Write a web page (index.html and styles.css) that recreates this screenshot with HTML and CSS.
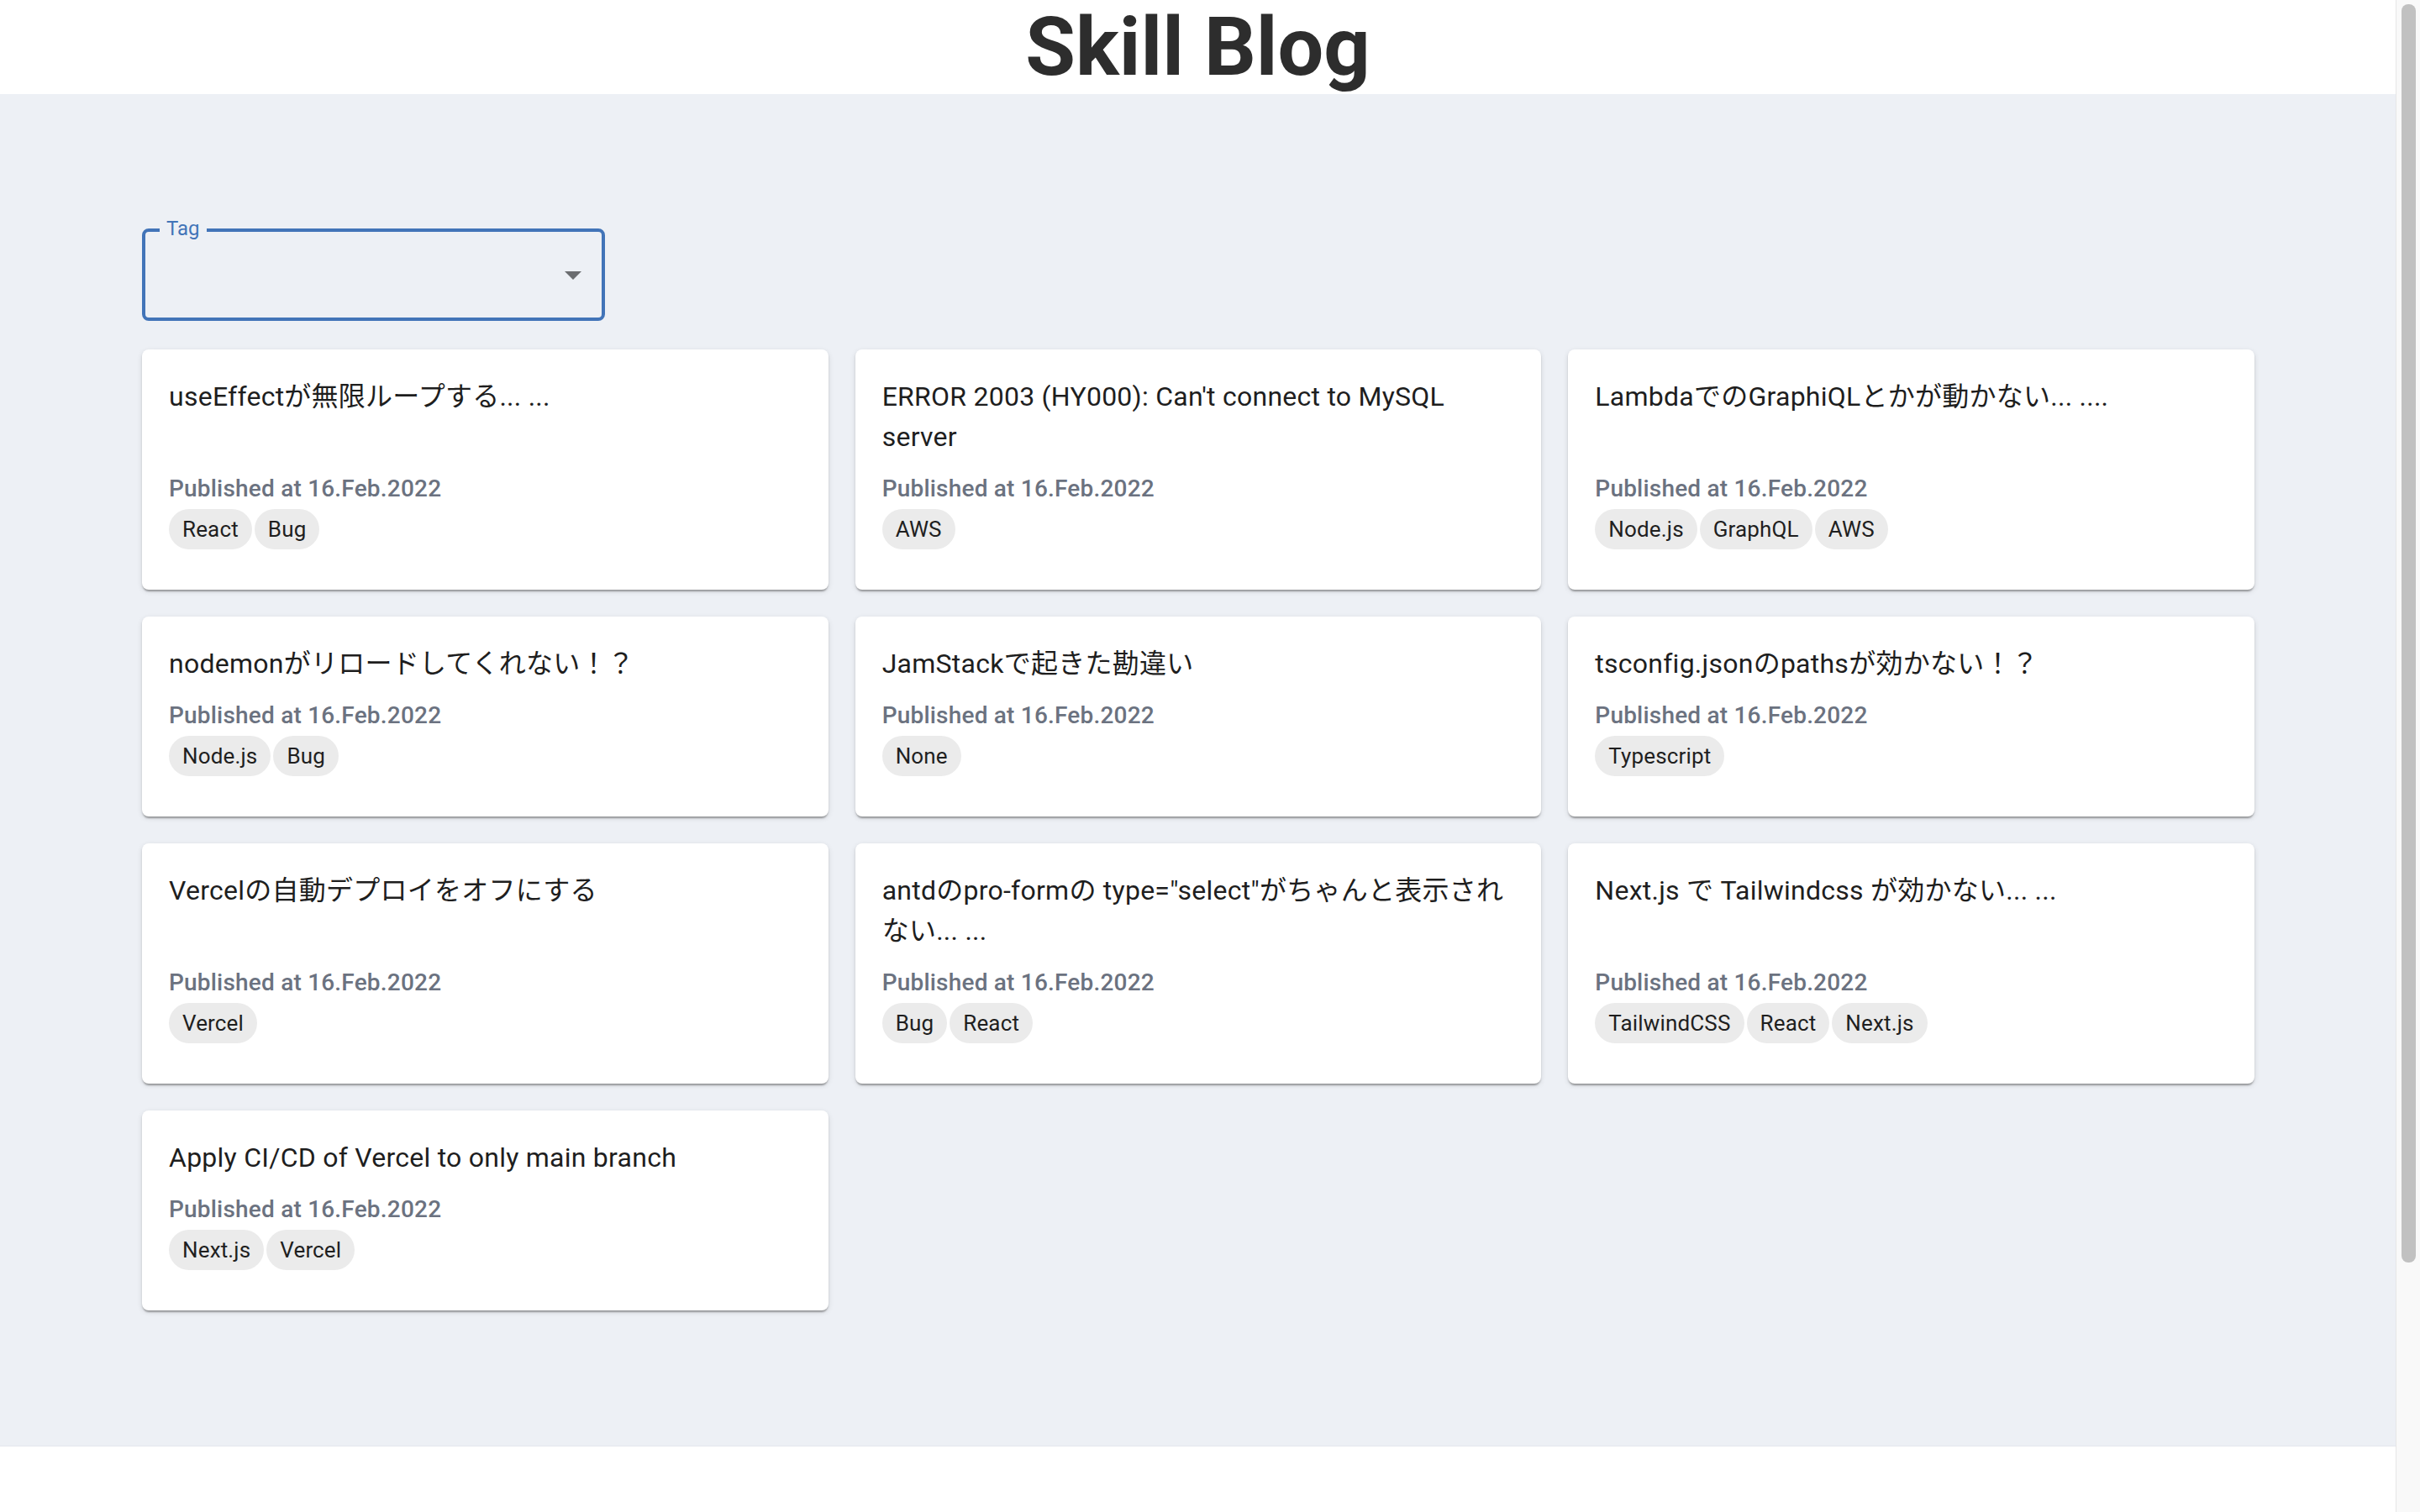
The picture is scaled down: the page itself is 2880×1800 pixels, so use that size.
FILE: index.html
```html
<!DOCTYPE html>
<html lang="ja">
<head>
<meta charset="utf-8">
<title>Skill Blog</title>
<link rel="stylesheet" href="styles.css">
</head>
<body>
<div class="window">
  <div class="page">
    <header class="site-header">
      <h1 class="site-title">Skill Blog</h1>
    </header>
    <main class="main">
      <div class="tag-field">
        <span class="tag-label">Tag</span>
        <svg class="tag-arrow" viewBox="0 0 24 24" width="48" height="48"><path d="M7 10l5 5 5-5z"/></svg>
      </div>
      <div class="grid">
        <article class="card">
          <h2 class="card-title">useEffectが無限ループする... ...</h2>
          <div class="card-meta">
            <p class="published">Published at 16.Feb.2022</p>
            <div class="chips"><span class="chip">React</span><span class="chip">Bug</span></div>
          </div>
        </article>
        <article class="card">
          <h2 class="card-title">ERROR 2003 (HY000): Can't connect to MySQL server</h2>
          <div class="card-meta">
            <p class="published">Published at 16.Feb.2022</p>
            <div class="chips"><span class="chip">AWS</span></div>
          </div>
        </article>
        <article class="card">
          <h2 class="card-title">LambdaでのGraphiQLとかが動かない... ....</h2>
          <div class="card-meta">
            <p class="published">Published at 16.Feb.2022</p>
            <div class="chips"><span class="chip">Node.js</span><span class="chip">GraphQL</span><span class="chip">AWS</span></div>
          </div>
        </article>
        <article class="card">
          <h2 class="card-title">nodemonがリロードしてくれない！？</h2>
          <div class="card-meta">
            <p class="published">Published at 16.Feb.2022</p>
            <div class="chips"><span class="chip">Node.js</span><span class="chip">Bug</span></div>
          </div>
        </article>
        <article class="card">
          <h2 class="card-title">JamStackで起きた勘違い</h2>
          <div class="card-meta">
            <p class="published">Published at 16.Feb.2022</p>
            <div class="chips"><span class="chip">None</span></div>
          </div>
        </article>
        <article class="card">
          <h2 class="card-title">tsconfig.jsonのpathsが効かない！？</h2>
          <div class="card-meta">
            <p class="published">Published at 16.Feb.2022</p>
            <div class="chips"><span class="chip">Typescript</span></div>
          </div>
        </article>
        <article class="card">
          <h2 class="card-title">Vercelの自動デプロイをオフにする</h2>
          <div class="card-meta">
            <p class="published">Published at 16.Feb.2022</p>
            <div class="chips"><span class="chip">Vercel</span></div>
          </div>
        </article>
        <article class="card">
          <h2 class="card-title">antdのpro-formの type="select"がちゃんと表示されない... ...</h2>
          <div class="card-meta">
            <p class="published">Published at 16.Feb.2022</p>
            <div class="chips"><span class="chip">Bug</span><span class="chip">React</span></div>
          </div>
        </article>
        <article class="card">
          <h2 class="card-title">Next.js で Tailwindcss が効かない... ...</h2>
          <div class="card-meta">
            <p class="published">Published at 16.Feb.2022</p>
            <div class="chips"><span class="chip">TailwindCSS</span><span class="chip">React</span><span class="chip">Next.js</span></div>
          </div>
        </article>
        <article class="card">
          <h2 class="card-title">Apply CI/CD of Vercel to only main branch</h2>
          <div class="card-meta">
            <p class="published">Published at 16.Feb.2022</p>
            <div class="chips"><span class="chip">Next.js</span><span class="chip">Vercel</span></div>
          </div>
        </article>
      </div>
    </main>
    <footer class="site-footer"></footer>
  </div>
  <div class="scrollbar"><div class="scroll-thumb"></div></div>
</div>
</body>
</html>
```

FILE: styles.css
```css
html, body {
  margin: 0;
  padding: 0;
  height: 1800px;
  overflow: hidden;
  background: #ffffff;
  font-family: Roboto, "Noto Sans CJK JP", sans-serif;
}

.window {
  display: flex;
  height: 1800px;
}

.page {
  flex: 1;
  display: flex;
  flex-direction: column;
  min-width: 0;
}

.site-header {
  height: 112px;
  background: #ffffff;
  display: flex;
  justify-content: center;
}

.site-title {
  margin: 0;
  font-family: Roboto, sans-serif;
  font-weight: 700;
  font-size: 97px;
  line-height: 112px;
  color: #2d2d2d;
}

.main {
  background: #edf0f5;
  padding: 160px 168px 161px 169px;
}

.tag-field {
  position: relative;
  box-sizing: border-box;
  width: 551px;
  height: 110px;
  border: 4px solid #4274b8;
  border-radius: 8px;
  display: flex;
  justify-content: flex-end;
  align-items: center;
  padding-right: 10px;
  margin-bottom: 34px;
}

.tag-label {
  position: absolute;
  left: 17px;
  top: -16px;
  padding: 0 8px;
  background: #edf0f5;
  font-size: 24px;
  line-height: 24px;
  color: #4274b8;
}

.tag-arrow {
  fill: #6b6d70;
  display: block;
}

.grid {
  display: grid;
  grid-template-columns: repeat(3, 1fr);
  gap: 32px;
}

.card {
  background: #ffffff;
  border-radius: 8px;
  box-shadow: 0 4px 2px -2px rgba(0,0,0,0.2), 0 2px 2px 0 rgba(0,0,0,0.14), 0 2px 6px 0 rgba(0,0,0,0.12);
  padding: 32px 32px 48px;
  display: flex;
  flex-direction: column;
}

.card-title {
  margin: 0 0 16px;
  font-size: 32px;
  line-height: 48px;
  font-weight: 400;
  letter-spacing: 0.25px;
  color: #1e1e1e;
}

.card-meta {
  margin-top: auto;
}

.published {
  margin: 0;
  padding-top: 2px;
  font-size: 28px;
  line-height: 40px;
  font-weight: 500;
  letter-spacing: 0.2px;
  color: #6b7280;
}

.chips {
  display: flex;
  gap: 3px;
  margin-top: 4px;
}

.chip {
  height: 48px;
  line-height: 48px;
  padding: 0 16px;
  border-radius: 24px;
  background: #ebebeb;
  color: #1f1f1f;
  font-size: 26px;
  letter-spacing: 0.15px;
}

.site-footer {
  flex: 1;
  background: #ffffff;
  border-top: 1px solid #e4e7ed;
}

.scrollbar {
  width: 29px;
  box-sizing: border-box;
  background: #f9f9f9;
  border-left: 1px solid #e6e6e6;
  padding: 5px 5px 0 6px;
}

.scroll-thumb {
  height: 1498px;
  background: #c1c1c1;
  border-radius: 8px;
}
```
